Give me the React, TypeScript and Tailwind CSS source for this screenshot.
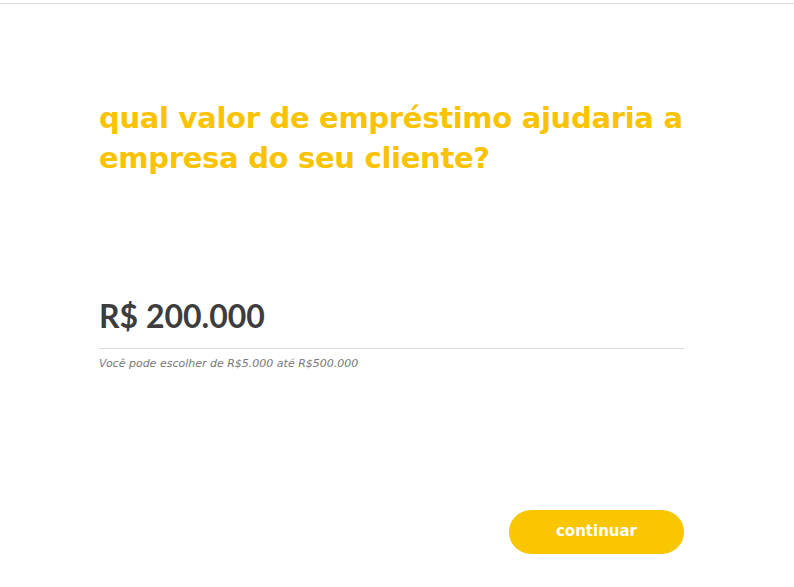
export default function App() {
  return (
    <div className="min-h-[587px] w-full bg-white font-['DejaVu_Sans',sans-serif]">
      <div className="h-[4px] border-b border-[#dcdcdc]" />
      <main className="ml-[99px] w-[585px] pt-[94px]">
        <h1 className="text-[29px] font-bold leading-[40px] tracking-[-0.3px] text-[#f9c300]">
          qual valor de empréstimo ajudaria a empresa do seu cliente?
        </h1>
        <div className="mt-[118px]">
          <div className="font-['Lato',sans-serif] text-[32px] font-bold leading-[40px] text-[#3d3d3d]">
            R$ 200.000
          </div>
          <div className="mt-[12px] border-b border-[#d9d9d9]" />
          <p className="mt-[7px] text-[11px] italic text-[#777]">
            Você pode escolher de R$5.000 até R$500.000
          </p>
        </div>
        <div className="mt-[137px] flex justify-end">
          <button className="h-[44px] w-[175px] rounded-full bg-[#f9c600] text-[15px] font-bold text-white">
            continuar
          </button>
        </div>
      </main>
    </div>
  );
}
